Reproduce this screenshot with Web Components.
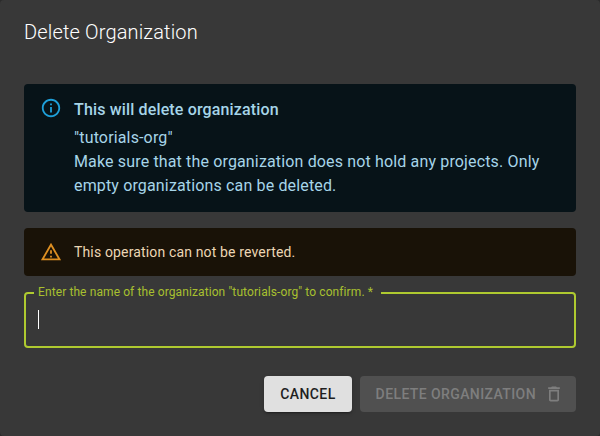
<!DOCTYPE html>
<html>
<head>
<meta charset="utf-8">
<style>
    html, body { margin: 0; height: 100%; background: #2b2b2b; }
    body { font-family: Roboto, "Liberation Sans", sans-serif; }
</style>
</head>
<body>
<delete-dialog>
    <span slot="title">Delete Organization</span>
    <app-alert severity="info" heading="This will delete organization">
        "tutorials-org"<br>Make sure that the organization does not hold any projects. Only empty organizations can be deleted.
    </app-alert>
    <app-alert severity="warning">This operation can not be reverted.</app-alert>
    <outlined-field label="Enter the name of the organization &quot;tutorials-org&quot; to confirm. *"></outlined-field>
    <app-button slot="actions" variant="light">CANCEL</app-button>
    <app-button slot="actions" variant="disabled" trash>DELETE ORGANIZATION</app-button>
</delete-dialog>
<script>
class DeleteDialog extends HTMLElement {
    constructor() {
        super();
        this.attachShadow({ mode: 'open' });
        this.shadowRoot.innerHTML = `
            <style>
                :host {
                    display: flex;
                    flex-direction: column;
                    width: 600px;
                    height: 436px;
                    box-sizing: border-box;
                    background: #383838;
                    border-radius: 4px;
                    overflow: hidden;
                }
                .title {
                    padding: 16px 24px;
                    font-size: 20px;
                    font-weight: 300;
                    line-height: 32px;
                    letter-spacing: 0.15px;
                    color: #fff;
                }
                .content {
                    display: flex;
                    flex-direction: column;
                    gap: 16px;
                    padding: 20px 24px 0;
                }
                .actions {
                    display: flex;
                    justify-content: flex-end;
                    gap: 8px;
                    padding: 28px 24px 0;
                }
            </style>
            <div class="title"><slot name="title"></slot></div>
            <div class="content"><slot></slot></div>
            <div class="actions"><slot name="actions"></slot></div>
        `;
    }
}

class AppAlert extends HTMLElement {
    constructor() {
        super();
        this.attachShadow({ mode: 'open' });
    }

    connectedCallback() {
        const isInfo = this.getAttribute('severity') === 'info';
        const heading = this.getAttribute('heading');
        const icon = isInfo
            ? `<path d="M11 7h2v2h-2zm0 4h2v6h-2zm1-9C6.48 2 2 6.48 2 12s4.48 10 10 10 10-4.48 10-10S17.52 2 12 2zm0 18c-4.41 0-8-3.59-8-8s3.59-8 8-8 8 3.59 8 8-3.59 8-8 8z"/>`
            : `<path d="M12 5.99L19.53 19H4.47L12 5.99M12 2L1 21h22L12 2zm1 14h-2v2h2v-2zm0-6h-2v4h2v-4z"/>`;

        this.shadowRoot.innerHTML = `
            <style>
                :host {
                    display: flex;
                    gap: 12px;
                    padding: 6px 16px;
                    border-radius: 4px;
                    font-size: ${isInfo ? '16px' : '14px'};
                    line-height: ${isInfo ? '24px' : '20px'};
                    letter-spacing: 0.15px;
                    background: ${isInfo ? '#071318' : '#191207'};
                    color: ${isInfo ? '#a6d5e8' : '#ecd6b4'};
                }
                svg {
                    flex: none;
                    width: 22px;
                    height: 22px;
                    padding: 7px 0;
                    fill: ${isInfo ? '#1e9fd8' : '#dd8f22'};
                }
                .message { padding: 8px 0; }
                .heading { font-weight: 500; margin-bottom: 4px; }
            </style>
            <svg viewBox="0 0 24 24">${icon}</svg>
            <div class="message">
                ${heading ? `<div class="heading">${heading}</div>` : ''}
                <slot></slot>
            </div>
        `;
    }
}

class OutlinedField extends HTMLElement {
    constructor() {
        super();
        this.attachShadow({ mode: 'open' });
    }

    connectedCallback() {
        this.shadowRoot.innerHTML = `
            <style>
                :host {
                    display: block;
                    position: relative;
                    height: 56px;
                    box-sizing: border-box;
                    border: 2px solid #afca30;
                    border-radius: 4px;
                }
                .label {
                    position: absolute;
                    top: -10px;
                    left: 8px;
                    padding: 0 8px 0 4px;
                    background: #383838;
                    font-size: 12px;
                    line-height: 16px;
                    letter-spacing: 0.1px;
                    color: #a8c02f;
                    white-space: nowrap;
                }
                .caret {
                    position: absolute;
                    left: 12px;
                    top: 16px;
                    width: 1px;
                    height: 19px;
                    background: #fff;
                }
            </style>
            <span class="label">${this.getAttribute('label')}</span>
            <span class="caret"></span>
        `;
    }
}

class AppButton extends HTMLElement {
    constructor() {
        super();
        this.attachShadow({ mode: 'open' });
    }

    connectedCallback() {
        const disabled = this.getAttribute('variant') === 'disabled';
        this.shadowRoot.innerHTML = `
            <style>
                :host {
                    display: inline-flex;
                    align-items: center;
                    justify-content: center;
                    gap: 8px;
                    height: 36px;
                    box-sizing: border-box;
                    padding: 0 16px;
                    border-radius: 4px;
                    font-size: 14px;
                    font-weight: 500;
                    letter-spacing: 0.4px;
                    background: ${disabled ? '#505050' : '#e0e0e0'};
                    color: ${disabled ? '#7e7e7e' : '#1f1f1f'};
                    box-shadow: ${disabled ? 'none' : '0 3px 1px -2px rgba(0,0,0,.2), 0 2px 2px rgba(0,0,0,.14), 0 1px 5px rgba(0,0,0,.12)'};
                }
                svg { width: 20px; height: 20px; fill: #7e7e7e; margin-right: -4px; }
            </style>
            <slot></slot>
            ${this.hasAttribute('trash') ? `<svg viewBox="0 0 24 24"><path d="M6 19c0 1.1.9 2 2 2h8c1.1 0 2-.9 2-2V7H6v12zM8 9h8v10H8V9zm7.5-5l-1-1h-5l-1 1H5v2h14V4h-3.5z"/></svg>` : ''}
        `;
    }
}

customElements.define('delete-dialog', DeleteDialog);
customElements.define('app-alert', AppAlert);
customElements.define('outlined-field', OutlinedField);
customElements.define('app-button', AppButton);
</script>
</body>
</html>
